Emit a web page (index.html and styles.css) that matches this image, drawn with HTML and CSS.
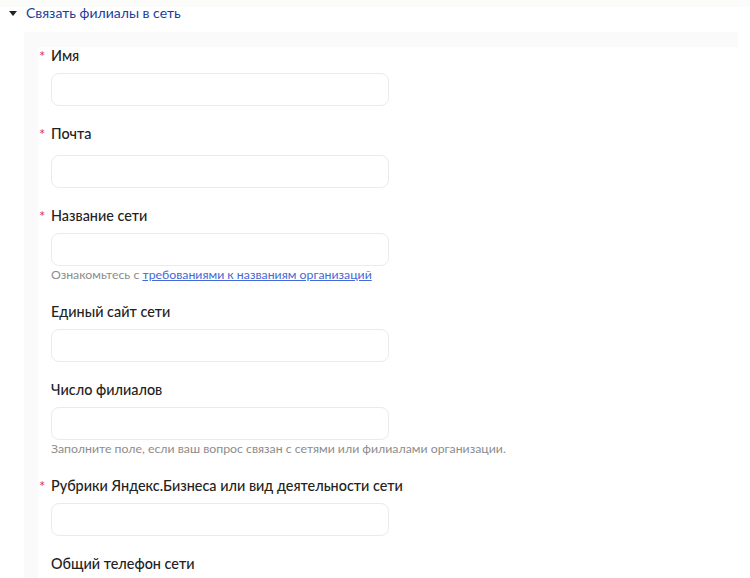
FILE: index.html
```html
<!DOCTYPE html>
<html lang="ru">
<head>
<meta charset="utf-8">
<link rel="stylesheet" href="styles.css">
</head>
<body>
<div class="topstrip"></div>
<div class="section">
  <div class="summary">
    <span class="caret"></span>
    <span class="summary-text">Связать филиалы в сеть</span>
  </div>
  <div class="panel">
    <div class="form">
      <div class="field">
        <div class="label required">Имя</div>
        <div class="input"></div>
      </div>
      <div class="field">
        <div class="label required label-loose">Почта</div>
        <div class="input"></div>
      </div>
      <div class="field">
        <div class="label required">Название сети</div>
        <div class="input"></div>
        <div class="hint">Ознакомьтесь с <a class="link" href="#">требованиями к названиям организаций</a></div>
      </div>
      <div class="field">
        <div class="label">Единый сайт сети</div>
        <div class="input"></div>
      </div>
      <div class="field">
        <div class="label">Число филиалов</div>
        <div class="input"></div>
        <div class="hint">Заполните поле, если ваш вопрос связан с сетями или филиалами организации.</div>
      </div>
      <div class="field">
        <div class="label required">Рубрики Яндекс.Бизнеса или вид деятельности сети</div>
        <div class="input"></div>
      </div>
      <div class="field">
        <div class="label">Общий телефон сети</div>
        <div class="input"></div>
      </div>
    </div>
  </div>
</div>
</body>
</html>
```
FILE: styles.css
```css
html, body {
  margin: 0;
  padding: 0;
  background: #ffffff;
  font-family: Lato, "Open Sans", sans-serif;
  color: #222;
  overflow: hidden;
  height: 578px;
}
.topstrip {
  height: 7px;
  background: #fbfbfa;
}
.summary {
  display: flex;
  align-items: center;
  height: 12px;
  padding: 0 0 0 9px;
}
.caret {
  width: 0;
  height: 0;
  border-left: 4px solid transparent;
  border-right: 4px solid transparent;
  border-top: 5px solid #222;
  margin-right: 9px;
}
.summary-text {
  color: #1c3c9c;
  font-size: 14px;
  line-height: 12px;
}
.panel {
  margin: 13px 12px 0 24px;
  padding: 16px 0 0 14px;
  background: #fafafa;
}
.form {
  background: #fff;
  padding: 0 0 0 13px;
  height: 560px;
}
.field {
  margin-bottom: 19px;
}
.label {
  position: relative;
  font-size: 14.4px;
  line-height: 18px;
  font-weight: 500;
  color: #222;
  margin-bottom: 8px;
}
.field:first-child .label {
  margin-top: -1px;
}
.label-loose {
  margin-bottom: 12px;
}
.label.required::before {
  content: "*";
  position: absolute;
  left: -12px;
  top: 0;
  color: #e0354f;
  font-size: 15px;
  font-weight: 400;
}
.input {
  width: 336px;
  height: 31px;
  border: 1px solid #ebebeb;
  border-radius: 8px;
  background: #fff;
}
.hint {
  font-size: 12.3px;
  line-height: 18px;
  color: #8c8c8c;
}
.link {
  color: #4469d6;
  text-decoration: underline;
}
```
